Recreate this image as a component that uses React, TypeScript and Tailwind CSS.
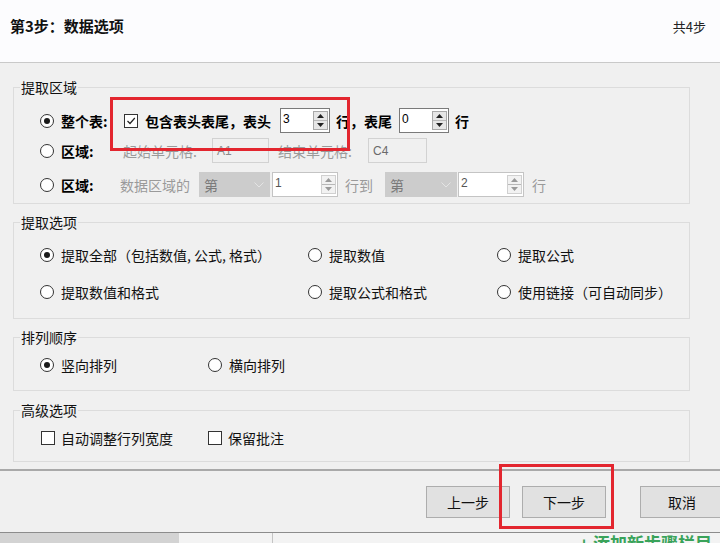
import React from "react";

const cjk = "font-['Noto_Sans_CJK_SC','Noto_Sans',sans-serif]";

function Radio({ checked }: { checked?: boolean }) {
  return (
    <span className="flex h-[14px] w-[14px] shrink-0 items-center justify-center rounded-full border border-[#333333] bg-white">
      {checked && <span className="h-[6px] w-[6px] rounded-full bg-[#1a1a1a]" />}
    </span>
  );
}

function Check({ checked }: { checked?: boolean }) {
  return (
    <span className="flex h-[14px] w-[14px] shrink-0 items-center justify-center border border-[#333333] bg-white">
      {checked && (
        <svg width="10" height="10" viewBox="0 0 10 10">
          <polyline points="1.5,5 4,7.5 8.8,2" fill="none" stroke="#222" strokeWidth="1.2" />
        </svg>
      )}
    </span>
  );
}

function Spin({ value, className, disabled }: { value: string; className: string; disabled?: boolean }) {
  const arrow = disabled ? "#9a9a9a" : "#222";
  return (
    <div
      className={`flex h-[25px] items-center border bg-white ${className} ${
        disabled ? "border-[#c4c4c4] text-[#555]" : "border-[#7a7a7a] text-black"
      }`}
    >
      <span className="flex-1 self-start pl-[2px] font-['Liberation_Sans',sans-serif] text-[12px] leading-[20px]">
        {value}
      </span>
      <div
        className={`mr-[1px] flex h-[19px] w-[15px] flex-col border ${
          disabled ? "border-[#d0d0d0] bg-[#f2f2f2]" : "border-[#a8a8a8] bg-[#e6e6e6]"
        }`}
      >
        <div className="flex flex-1 items-center justify-center border-b border-[#b8b8b8]">
          <svg width="7" height="4" viewBox="0 0 7 4">
            <polygon points="0,4 3.5,0 7,4" fill={arrow} />
          </svg>
        </div>
        <div className="flex flex-1 items-center justify-center">
          <svg width="7" height="4" viewBox="0 0 7 4">
            <polygon points="0,0 3.5,4 7,0" fill={arrow} />
          </svg>
        </div>
      </div>
    </div>
  );
}

function Combo({ className }: { className: string }) {
  return (
    <div className={`flex h-[25px] items-center justify-between bg-[#cccccc] pl-[5px] pr-[6px] ${className}`}>
      <span className="text-[14px] leading-[20px] text-[#7a7a7a]">第</span>
      <svg width="10" height="6" viewBox="0 0 10 6">
        <polyline points="0.5,0.5 5,5 9.5,0.5" fill="none" stroke="#e4e4e4" strokeWidth="1" />
      </svg>
    </div>
  );
}

function Group({ title, children, className }: { title: string; children: React.ReactNode; className: string }) {
  return (
    <fieldset className={`border border-[#dcdcdc] ${className}`}>
      <legend className="ml-[6px] px-[1px] text-[14px] leading-[16px] text-[#111]">{title}</legend>
      {children}
    </fieldset>
  );
}

export default function App() {
  return (
    <div className={`relative h-[543px] w-[720px] overflow-hidden bg-[#f0f0f0] ${cjk}`}>
      {/* 标题栏 */}
      <div className="flex h-[63px] items-start justify-between border-b border-[#c9c9c9] bg-[#fcfcfe] pl-[10px] pr-[14px] pt-[16px]">
        <h1 className="text-[15px] font-bold leading-[20px] text-[#111]">第3步：数据选项</h1>
        <span className="pt-[2px] text-[13px] leading-[18px] text-[#222]">共4步</span>
      </div>

      <div className="h-[406px] pl-[13px] pr-[30px] pt-[16px]">
        {/* 提取区域 */}
        <Group title="提取区域" className="pb-[6px] pt-[13px]">
          <div className="pl-[26px]">
            <div className="flex h-[25px] items-center text-[14px] leading-[20px]">
              <Radio checked />
              <span className="ml-[7px] w-[63px] font-bold">整个表:</span>
              <Check checked />
              <span className="ml-[7px] w-[135px] font-bold">包含表头表尾，表头</span>
              <Spin value="3" className="w-[50px]" />
              <span className="ml-[6px] w-[63px] font-bold">行，表尾</span>
              <Spin value="0" className="w-[50px]" />
              <span className="ml-[6px] font-bold">行</span>
            </div>
            <div className="mt-[5px] flex h-[25px] items-center text-[14px] leading-[20px]">
              <Radio />
              <span className="ml-[7px] w-[62px] font-bold">区域:</span>
              <span className="w-[89px] text-[#9a9a9a]">起始单元格:</span>
              <div className="flex h-[25px] w-[57px] items-center border border-[#d2d2d2] pl-[4px] font-['Liberation_Sans',sans-serif] text-[12px] text-[#8a8a8a]">
                A1
              </div>
              <span className="ml-[9px] w-[90px] text-[#9a9a9a]">结束单元格:</span>
              <div className="flex h-[25px] w-[59px] items-center border border-[#d2d2d2] pl-[4px] font-['Liberation_Sans',sans-serif] text-[12px] text-[#6a6a6a]">
                C4
              </div>
            </div>
            <div className="mt-[9px] flex h-[25px] items-center text-[14px] leading-[20px]">
              <Radio />
              <span className="ml-[7px] w-[59px] font-bold">区域:</span>
              <span className="w-[79px] text-[#9a9a9a]">数据区域的</span>
              <Combo className="w-[71px]" />
              <Spin value="1" disabled className="ml-[2px] w-[66px]" />
              <span className="ml-[7px] w-[40px] text-[#9a9a9a]">行到</span>
              <Combo className="w-[72px]" />
              <Spin value="2" disabled className="ml-[1px] w-[66px]" />
              <span className="ml-[8px] text-[#9a9a9a]">行</span>
            </div>
          </div>
        </Group>

        {/* 提取选项 */}
        <Group title="提取选项" className="mt-[10px] pb-[16px] pt-[15px]">
          <div className="grid grid-cols-[268px_189px_1fr] gap-y-[17px] pl-[26px] text-[14px] leading-[20px] text-[#111]">
            <label className="flex items-center gap-[7px]">
              <Radio checked />
              提取全部（包括数值, 公式, 格式）
            </label>
            <label className="flex items-center gap-[7px]">
              <Radio />
              提取数值
            </label>
            <label className="flex items-center gap-[7px]">
              <Radio />
              提取公式
            </label>
            <label className="flex items-center gap-[7px]">
              <Radio />
              提取数值和格式
            </label>
            <label className="flex items-center gap-[7px]">
              <Radio />
              提取公式和格式
            </label>
            <label className="flex items-center gap-[7px]">
              <Radio />
              使用链接（可自动同步）
            </label>
          </div>
        </Group>

        {/* 排列顺序 */}
        <Group title="排列顺序" className="mt-[10px] pb-[15px] pt-[10px]">
          <div className="grid grid-cols-[168px_1fr] pl-[26px] text-[14px] leading-[20px] text-[#111]">
            <label className="flex items-center gap-[7px]">
              <Radio checked />
              竖向排列
            </label>
            <label className="flex items-center gap-[7px]">
              <Radio />
              横向排列
            </label>
          </div>
        </Group>

        {/* 高级选项 */}
        <Group title="高级选项" className="mt-[11px] pb-[13px] pt-[10px]">
          <div className="grid grid-cols-[167px_1fr] pl-[27px] text-[14px] leading-[20px] text-[#111]">
            <label className="flex items-center gap-[6px]">
              <Check />
              自动调整行列宽度
            </label>
            <label className="flex items-center gap-[6px]">
              <Check />
              保留批注
            </label>
          </div>
        </Group>
      </div>

      {/* 按钮区 */}
      <div className="flex h-[63px] items-start border-t-2 border-[#a9a9a9] pl-[426px] pt-[15px]">
        <button className="h-[32px] w-[84px] shrink-0 border border-[#adadad] bg-[#e1e1e1] text-[14px] text-[#111]">
          上一步
        </button>
        <button className="ml-[12px] h-[32px] w-[84px] shrink-0 border border-[#adadad] bg-[#e1e1e1] text-[14px] text-[#111]">
          下一步
        </button>
        <button className="ml-[34px] h-[32px] w-[84px] shrink-0 border border-[#adadad] bg-[#e1e1e1] text-[14px] text-[#111]">
          取消
        </button>
      </div>

      {/* 底部窗口边缘 */}
      <div className="flex h-[12px] border-t border-[#8c8c8c] bg-[#f3f3f3]">
        <div className="w-[179px] bg-[#d3d3d3]" />
        <div className="w-[94px] border-r border-[#c4c4c4]" />
        <div className="ml-[306px] overflow-hidden">
          <span className="-mt-[2px] block text-[17px] font-bold leading-[24px] text-[#3aa35a]">+ 添加新步骤栏目</span>
        </div>
      </div>

      {/* 红色标注框 */}
      <div className="pointer-events-none absolute left-[110px] top-[97px] h-[54px] w-[240px] border-[3px] border-[#e3262f]" />
      <div className="pointer-events-none absolute left-[499px] top-[464px] h-[65px] w-[115px] border-[3px] border-[#e3262f]" />
    </div>
  );
}
